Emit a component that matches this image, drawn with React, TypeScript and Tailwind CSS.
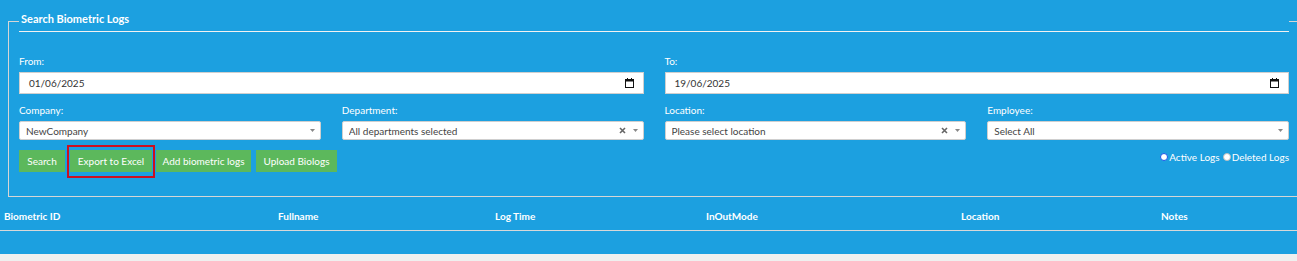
import React from "react";

function Arrow() {
  return (
    <svg width="5" height="3" viewBox="0 0 5 3" className="shrink-0">
      <path d="M0 0 L5 0 L2.5 3 Z" fill="#888" />
    </svg>
  );
}

function Clear() {
  return (
    <svg width="7" height="7" viewBox="0 0 7 7" className="shrink-0">
      <path d="M1 1 L6 6 M6 1 L1 6" stroke="#666" strokeWidth="1.6" />
    </svg>
  );
}

function Calendar() {
  return (
    <svg width="9" height="10" viewBox="0 0 9 10" className="shrink-0">
      <rect x="0.5" y="1.5" width="8" height="8" fill="none" stroke="#111" strokeWidth="1" />
      <rect x="0" y="1" width="9" height="2.5" fill="#111" />
      <rect x="2" y="0" width="1" height="2" fill="#111" />
      <rect x="6" y="0" width="1" height="2" fill="#111" />
    </svg>
  );
}

function Label({ children }: { children: React.ReactNode }) {
  return <div className="text-white text-[10px] leading-[14px] mb-[4px]">{children}</div>;
}

function DateInput({ value }: { value: string }) {
  return (
    <div className="h-[22px] bg-white border border-[#cfcfcf] flex items-center pl-[9px] pr-[9px] justify-between">
      <span className="text-[#333] text-[10px] leading-[14px]">{value}</span>
      <Calendar />
    </div>
  );
}

function Select({ text, clear }: { text: string; clear?: boolean }) {
  return (
    <div className="h-[19px] bg-white border border-[#cfcfcf] rounded-[2px] flex items-center pl-[6px] pr-[5px]">
      <span className="flex-1 text-[#444] text-[10px] leading-[14px] truncate">{text}</span>
      {clear && (
        <span className="mr-[7px] flex items-center">
          <Clear />
        </span>
      )}
      <Arrow />
    </div>
  );
}

function Btn({ children, w }: { children: React.ReactNode; w: string }) {
  return (
    <div className={`${w} h-[22px] bg-[#5cb85c] text-white text-[10px] leading-[14px] flex items-center justify-center`}>
      {children}
    </div>
  );
}

export default function App() {
  return (
    <div className="w-[1297px] h-[261px] overflow-hidden bg-[#eff0ef] font-['Lato','Noto_Sans',sans-serif]">
      <div className="bg-[#1ca0e0] h-[254px] pt-[11px]">
        <fieldset className="ml-2 border border-r-0 border-[#d6d6d6] pl-[10px] pr-2 pb-[24px] m-0">
          <legend className="w-[1270px] border-b border-[#f2f2f2] text-white text-[11px] font-bold leading-[15px] pb-[5px] pl-[2px]">
            Search Biometric Logs
          </legend>

          <div className="grid grid-cols-2 gap-x-[21px] mt-[22px]">
            <div>
              <Label>From:</Label>
              <DateInput value="01/06/2025" />
            </div>
            <div>
              <Label>To:</Label>
              <DateInput value="19/06/2025" />
            </div>
          </div>

          <div className="grid grid-cols-4 gap-x-[21px] mt-[9px]">
            <div>
              <Label>Company:</Label>
              <Select text="NewCompany" />
            </div>
            <div>
              <Label>Department:</Label>
              <Select text="All departments selected" clear />
            </div>
            <div>
              <Label>Location:</Label>
              <Select text="Please select location" clear />
            </div>
            <div>
              <Label>Employee:</Label>
              <Select text="Select All" />
            </div>
          </div>

          <div className="flex justify-between items-start mt-[10px]">
            <div className="flex gap-[4px]">
              <Btn w="w-[46px]">Search</Btn>
              <div className="relative ml-[1px]">
                <Btn w="w-[82px]">Export to Excel</Btn>
                <span className="absolute left-[-3px] right-[-3px] top-[-5px] bottom-[-6px] border-2 border-[#cc1020]" />
              </div>
              <Btn w="w-[95px]">Add biometric logs</Btn>
              <div className="ml-[1px]">
                <Btn w="w-[81px]">Upload Biologs</Btn>
              </div>
            </div>
            <div className="flex items-center text-white text-[10px] leading-[14px] pr-0">
              <span className="w-[8px] h-[8px] rounded-full bg-white border border-[#1a55e8] mr-[1px]" />
              <span>Active Logs</span>
              <span className="w-[8px] h-[8px] rounded-full bg-white border border-[#bdbdbd] ml-[3px] mr-[1px]" />
              <span>Deleted Logs</span>
            </div>
          </div>
        </fieldset>

        <div className="mt-[12px] grid grid-cols-[274px_217px_211px_255px_200px_140px] border-b border-[#d8d8d8] pb-[7px] text-white text-[10px] font-bold leading-[14px]">
          <div className="px-[4px]">Biometric ID</div>
          <div className="px-[4px]">Fullname</div>
          <div className="px-[4px]">Log Time</div>
          <div className="px-[4px]">InOutMode</div>
          <div className="px-[4px]">Location</div>
          <div className="px-[4px]">Notes</div>
        </div>
      </div>
    </div>
  );
}
